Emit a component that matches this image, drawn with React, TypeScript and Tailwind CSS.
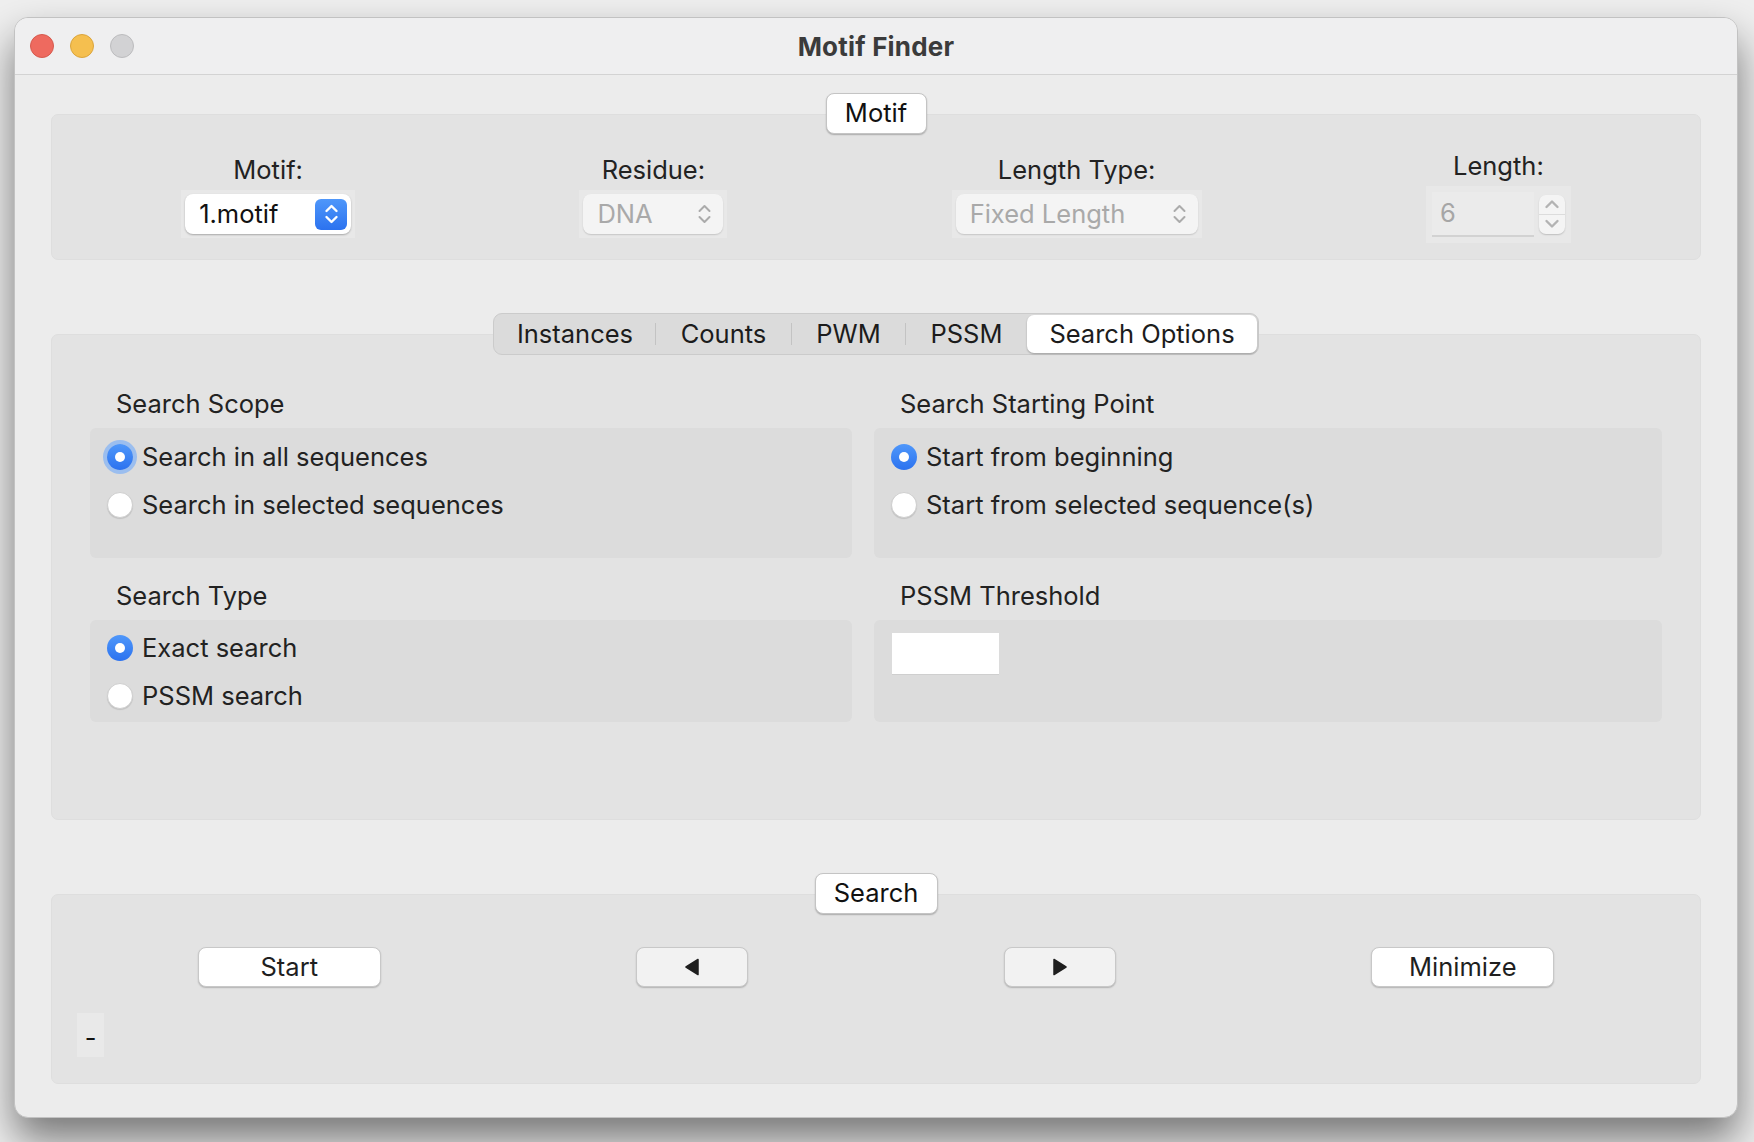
import React from "react";

function UpDown({ color, sw = 2 }: { color: string; sw?: number }) {
  return (
    <svg width="15" height="24" viewBox="0 0 15 24" fill="none" stroke={color} strokeWidth={sw} strokeLinecap="round" strokeLinejoin="round">
      <path d="M2.5 9 L7.5 4 L12.5 9" />
      <path d="M2.5 15 L7.5 20 L12.5 15" />
    </svg>
  );
}

function Chevron({ up }: { up?: boolean }) {
  return (
    <svg width="16" height="10" viewBox="0 0 16 10" fill="none" stroke="#b3b3b3" strokeWidth="2.4" strokeLinecap="round" strokeLinejoin="round">
      {up ? <path d="M2.5 8 L8 2.5 L13.5 8" /> : <path d="M2.5 2 L8 7.5 L13.5 2" />}
    </svg>
  );
}

function Radio({ checked, focus, label }: { checked?: boolean; focus?: boolean; label: string }) {
  return (
    <div className="flex items-center h-[48px] pl-[17px] gap-[9px]">
      {checked ? (
        <div
          className={
            "w-[26px] h-[26px] rounded-full bg-gradient-to-b from-[#4f97fa] to-[#2c72ef] flex items-center justify-center " +
            (focus ? "ring-[4px] ring-[#7fb0f7]/70" : "")
          }
        >
          <div className="w-[10px] h-[10px] rounded-full bg-white" />
        </div>
      ) : (
        <div className="w-[26px] h-[26px] rounded-full bg-white border border-[#cfcfcf] shadow-[0_1px_1px_rgba(0,0,0,0.12)]" />
      )}
      <span className="text-[25.5px] leading-[32px] text-[#222]">{label}</span>
    </div>
  );
}

function Btn({ children, w, light }: { children: React.ReactNode; w: string; light?: boolean }) {
  return (
    <div
      className={
        w +
        " h-[40px] rounded-[8px] flex items-center justify-center text-[25.5px] text-[#1f1f1f] border-[0.5px] border-[#c8c8c8] shadow-[0_1px_1.5px_rgba(0,0,0,0.22)] " +
        (light ? "bg-[#f2f2f2]" : "bg-white")
      }
    >
      {children}
    </div>
  );
}

function Legend({ children, w }: { children: React.ReactNode; w: string }) {
  return (
    <div
      className={
        w +
        " relative z-10 h-[41px] rounded-[8px] bg-white border-[0.5px] border-[#c4c4c4] shadow-[0_1px_1.5px_rgba(0,0,0,0.25)] flex items-center justify-center text-[25.5px] text-[#111]"
      }
    >
      {children}
    </div>
  );
}

function Field({ label, children }: { label: string; children: React.ReactNode }) {
  return (
    <div className="flex flex-col items-center gap-[4px]">
      <div className="text-[25.5px] leading-[32px] text-[#222]">{label}</div>
      {children}
    </div>
  );
}

const tabs = [
  { name: "Instances", w: "w-[160px]" },
  { name: "Counts", w: "w-[135px]" },
  { name: "PWM", w: "w-[113px]" },
  { name: "PSSM", w: "w-[121px]" },
  { name: "Search Options", w: "w-[230px]", on: true },
];

export default function App() {
  return (
    <div className="w-[1754px] h-[1142px] bg-[#efefef] overflow-hidden pt-[17px] pl-[14px] font-['Inter','Liberation_Sans',sans-serif]">
      <div className="w-[1724px] h-[1101px] rounded-[14px] bg-[#ececec] border border-[#c2c2c2] shadow-[0_22px_40px_rgba(0,0,0,0.5)] overflow-hidden flex flex-col">
        {/* title bar */}
        <div className="h-[57px] shrink-0 bg-[#efeff0] border-b border-[#d3d3d3] grid grid-cols-[1fr_auto_1fr] items-center">
          <div className="flex items-center gap-[16px] pl-[15px]">
            <div className="w-[24px] h-[24px] rounded-full bg-[#ee6a5f] border border-[#d65a4e]" />
            <div className="w-[24px] h-[24px] rounded-full bg-[#f5bf4f] border border-[#dba53c]" />
            <div className="w-[24px] h-[24px] rounded-full bg-[#d2d2d4] border border-[#bcbcbe]" />
          </div>
          <div className="text-[26px] font-bold text-[#3b3b3b] tracking-[0.2px]">Motif Finder</div>
          <div />
        </div>

        {/* body */}
        <div className="flex flex-col items-center px-[36px] pt-[18px]">
          {/* Motif group */}
          <Legend w="w-[101px]">Motif</Legend>
          <div className="w-full h-[146px] -mt-[20px] rounded-[7px] bg-[#e3e3e3] border border-[#dedede] px-[17px] flex items-center justify-around pt-[18px]">
            <Field label="Motif:">
              <div className="p-[4px] bg-[#e8e8e8]">
                <div className="w-[166px] h-[40px] rounded-[8px] bg-white shadow-[0_1px_2px_rgba(0,0,0,0.28)] flex items-center justify-between pl-[14px] pr-[4px]">
                  <span className="text-[25.5px] text-[#111]">1.motif</span>
                  <div className="w-[32px] h-[31px] rounded-[6px] bg-gradient-to-b from-[#4f97fa] to-[#2c72ef] flex items-center justify-center">
                    <UpDown color="#ffffff" sw={2.4} />
                  </div>
                </div>
              </div>
            </Field>
            <Field label="Residue:">
              <div className="p-[4px] bg-[#e8e8e8]">
                <div className="w-[140px] h-[40px] rounded-[8px] bg-[#f4f4f4] shadow-[0_1px_1.5px_rgba(0,0,0,0.15)] flex items-center justify-between pl-[14px] pr-[11px]">
                  <span className="text-[25.5px] text-[#a9a9a9]">DNA</span>
                  <UpDown color="#ababab" />
                </div>
              </div>
            </Field>
            <Field label="Length Type:">
              <div className="p-[4px] bg-[#e8e8e8]">
                <div className="w-[242px] h-[40px] rounded-[8px] bg-[#f4f4f4] shadow-[0_1px_1.5px_rgba(0,0,0,0.15)] flex items-center justify-between pl-[14px] pr-[11px]">
                  <span className="text-[25.5px] text-[#a9a9a9]">Fixed Length</span>
                  <UpDown color="#ababab" />
                </div>
              </div>
            </Field>
            <Field label="Length:">
              <div className="p-[6px] bg-[#e8e8e8] flex items-center gap-[5px]">
                <div className="w-[102px] h-[45px] bg-[#ebebeb] border-b-2 border-[#d2d2d2] flex items-center pl-[8px] text-[25.5px] text-[#a6a6a6]">
                  6
                </div>
                <div className="w-[26px] h-[39px] rounded-[7px] bg-[#f4f4f4] shadow-[0_1px_1.5px_rgba(0,0,0,0.18)] flex flex-col">
                  <div className="flex-1 flex items-center justify-center border-b border-[#dcdcdc]">
                    <Chevron up />
                  </div>
                  <div className="flex-1 flex items-center justify-center">
                    <Chevron />
                  </div>
                </div>
              </div>
            </Field>
          </div>

          {/* tabs */}
          <div className="relative z-10 mt-[53px] h-[42px] rounded-[9px] bg-[#dbdbdb] border border-[#cbcbcb] flex items-center px-[1px]">
            {tabs.map((t, i) => {
              const next = tabs[i + 1];
              return (
                <React.Fragment key={t.name}>
                  <div
                    className={
                      t.w +
                      " h-[38px] flex items-center justify-center text-[25.5px] text-[#1c1c1c] " +
                      (t.on ? "bg-white rounded-[7px] shadow-[0_1px_2px_rgba(0,0,0,0.28)]" : "")
                    }
                  >
                    {t.name}
                  </div>
                  {next && !next.on && !t.on && <div className="w-px h-[22px] bg-[#c3c3c3]" />}
                </React.Fragment>
              );
            })}
          </div>

          {/* tab content */}
          <div className="w-full h-[486px] -mt-[21px] rounded-[7px] bg-[#e3e3e3] border border-[#dedede] pt-[53px] px-[38px] grid grid-cols-[762px_1fr] gap-x-[22px]">
            <div className="flex flex-col">
              <div className="pl-[26px] text-[25.5px] leading-[32px] text-[#222]">Search Scope</div>
              <div className="mt-[8px] h-[130px] rounded-[6px] bg-[#dcdcdc] pt-[5px]">
                <Radio checked focus label="Search in all sequences" />
                <Radio label="Search in selected sequences" />
              </div>
              <div className="mt-[22px] pl-[26px] text-[25.5px] leading-[32px] text-[#222]">Search Type</div>
              <div className="mt-[8px] h-[102px] rounded-[6px] bg-[#dcdcdc] pt-[4px]">
                <Radio checked label="Exact search" />
                <Radio label="PSSM search" />
              </div>
            </div>
            <div className="flex flex-col">
              <div className="pl-[26px] text-[25.5px] leading-[32px] text-[#222]">Search Starting Point</div>
              <div className="mt-[8px] h-[130px] rounded-[6px] bg-[#dcdcdc] pt-[5px]">
                <Radio checked label="Start from beginning" />
                <Radio label="Start from selected sequence(s)" />
              </div>
              <div className="mt-[22px] pl-[26px] text-[25.5px] leading-[32px] text-[#222]">PSSM Threshold</div>
              <div className="mt-[8px] h-[102px] rounded-[6px] bg-[#dcdcdc] pt-[13px] pl-[18px]">
                <div className="w-[107px] h-[42px] bg-white border-b border-[#cfcfcf]" />
              </div>
            </div>
          </div>

          {/* search group */}
          <div className="mt-[53px]">
            <Legend w="w-[123px]">Search</Legend>
          </div>
          <div className="w-full h-[190px] -mt-[20px] rounded-[7px] bg-[#e3e3e3] border border-[#dedede] pt-[52px] flex flex-col">
            <div className="flex items-center justify-around px-[18px]">
              <Btn w="w-[183px]">Start</Btn>
              <Btn w="w-[112px]" light>
                <svg width="16" height="18" viewBox="0 0 16 18">
                  <path d="M14 1.5 L2 9 L14 16.5 Z" fill="#1f1f1f" stroke="#1f1f1f" strokeWidth="1.5" strokeLinejoin="round" />
                </svg>
              </Btn>
              <Btn w="w-[112px]" light>
                <svg width="16" height="18" viewBox="0 0 16 18">
                  <path d="M2 1.5 L14 9 L2 16.5 Z" fill="#1f1f1f" stroke="#1f1f1f" strokeWidth="1.5" strokeLinejoin="round" />
                </svg>
              </Btn>
              <Btn w="w-[183px]">Minimize</Btn>
            </div>
            <div className="mt-[26px] ml-[25px] w-[27px] h-[44px] bg-[#e9e9e9] flex items-center justify-center text-[25.5px] text-[#111] pt-[6px]">
              -
            </div>
          </div>
        </div>
      </div>
    </div>
  );
}
